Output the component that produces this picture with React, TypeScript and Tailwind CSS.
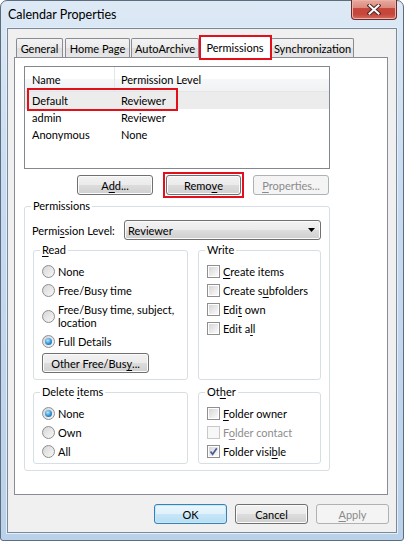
import type { ReactNode } from 'react';

// Win7 style push buttons
const btnNormal =
  'flex h-[20px] items-center justify-center rounded-[3px] border border-[#707070] bg-[linear-gradient(#f2f2f2,#ebebeb_50%,#dddddd_50%,#cfcfcf)] shadow-[inset_0_0_0_1px_#fbfbfb]';
const btnDefault =
  'flex h-[20px] items-center justify-center rounded-[3px] border border-[#3c7fb1] bg-[linear-gradient(#eaf6fd,#dff1fb_50%,#c7e7f8_50%,#b7ddf2)] shadow-[inset_0_0_0_1px_#c4e9fb]';
const btnOff =
  'flex h-[20px] items-center justify-center rounded-[3px] border border-[#adb2b5] bg-[#f4f4f4] text-[#8a8a8a]';

const tabOff =
  'flex h-[19px] items-center justify-center rounded-t-[2px] border border-b-0 border-[#898c95] bg-[linear-gradient(#f3f3f3,#ebebeb_50%,#dfdfdf_50%,#e6e6e6)] pt-[1px]';

const members = [
  { name: 'Default', level: 'Reviewer', selected: true },
  { name: 'admin', level: 'Reviewer' },
  { name: 'Anonymous', level: 'None' },
];

function U({ children }: { children: ReactNode }) {
  return <span className="underline decoration-1 underline-offset-[2px]">{children}</span>;
}

function Radio({ on }: { on?: boolean }) {
  return (
    <span className="flex h-[13px] w-[13px] shrink-0 items-center justify-center rounded-full border border-[#8e8f8f] bg-[linear-gradient(135deg,#d4d4d4,#f7f7f7)]">
      {on ? (
        <span className="h-[7px] w-[7px] rounded-full bg-[radial-gradient(circle_at_40%_35%,#bfe8fd,#2b8fd8_55%,#0f4f9e)]" />
      ) : (
        <span className="h-[9px] w-[9px] rounded-full bg-[linear-gradient(135deg,#d9d9d9,#f5f5f5)]" />
      )}
    </span>
  );
}

function Check({ on, off }: { on?: boolean; off?: boolean }) {
  return (
    <span
      className={
        off
          ? 'flex h-[13px] w-[13px] shrink-0 items-center justify-center border border-[#c9c9c9] bg-[#f7f7f7]'
          : 'flex h-[13px] w-[13px] shrink-0 items-center justify-center border border-[#8e8f8f] bg-white'
      }
    >
      {!off && (
        <span className="relative h-[9px] w-[9px] bg-[linear-gradient(135deg,#d6d6d6,#fbfbfb)]">
          {on && (
            <svg viewBox="0 0 9 9" className="absolute inset-0 h-[9px] w-[9px]">
              <path d="M1.5 4.5 L3.6 7.2 L7.8 1.2" fill="none" stroke="#4a5c98" strokeWidth="1.7" />
            </svg>
          )}
        </span>
      )}
    </span>
  );
}

function Opt({ control, children, muted }: { control: ReactNode; children: ReactNode; muted?: boolean }) {
  return (
    <div className="flex h-[19px] items-center gap-[3px]">
      {control}
      <span className={muted ? 'text-[#8d8d8d]' : ''}>{children}</span>
    </div>
  );
}

// group box; every group has 8px left padding, the legend pulls back 2px
function Group({ title, className, children }: { title: ReactNode; className: string; children: ReactNode }) {
  return (
    <fieldset className={`rounded-[3px] border border-[#d5dfe5] ${className}`}>
      <legend className="-ml-[2px] px-[2px] leading-[14px]">{title}</legend>
      {children}
    </fieldset>
  );
}

export default function App() {
  return (
    <div className="flex h-[541px] w-[404px] flex-col rounded-t-[7px] rounded-b-[3px] border border-[#5d6d80] bg-[linear-gradient(#dde9f5,#c8dbf0_35%,#bad1ea)] font-['Lato','Liberation_Sans',sans-serif] text-[11px] leading-[13px] text-black">
      {/* Title bar */}
      <div className="flex h-[27px] shrink-0 justify-between">
        <span className="self-center pl-[7px] text-[12.5px]">Calendar Properties</span>
        <div className="-mt-px mr-[6px] flex h-[20px] w-[46px] items-center justify-center rounded-b-[4px] border border-t-0 border-[#6b2c27] bg-[linear-gradient(#e9aa9f,#dc8a7e_40%,#c6463b_45%,#c6463b_75%,#d46d61)] shadow-[inset_0_0_0_1px_#eab3aa]">
          <svg viewBox="0 0 14 11" className="h-[11px] w-[14px]">
            <path d="M2.5 1.5 L11.5 9.5 M11.5 1.5 L2.5 9.5" stroke="#4a2624" strokeWidth="4" strokeLinecap="square" />
            <path d="M2.5 1.5 L11.5 9.5 M11.5 1.5 L2.5 9.5" stroke="#ffffff" strokeWidth="2" strokeLinecap="square" />
          </svg>
        </div>
      </div>

      {/* Client area */}
      <div className="mx-[6px] mb-[7px] flex-1 border border-[#7b8897] bg-[#f0f0f0] pl-[6px] pt-[7px] shadow-[0_0_0_1px_#e4eef9]">
        {/* Tabs */}
        <div className="flex h-[21px] items-end">
          <div className={`ml-[2px] w-[47px] ${tabOff}`}>General</div>
          <div className={`ml-[2px] w-[65px] ${tabOff}`}>Home Page</div>
          <div className={`ml-[1px] w-[68px] ${tabOff}`}>AutoArchive</div>
          <div className="relative z-10 -mb-px flex h-[22px] w-[72px] items-center justify-center rounded-t-[2px] border border-b-0 border-[#898c95] bg-white">
            Permissions
            <span className="absolute -top-[2px] -bottom-[2px] -left-[1px] -right-[2px] border-2 border-[#e3101c]" />
          </div>
          <div className={`w-[83px] ${tabOff}`}>Synchronization</div>
        </div>

        {/* Tab page */}
        <div className="relative h-[438px] w-[374px] border border-[#898c95] bg-white pl-[9px] pt-[8px]">
          {/* Member list */}
          <div className="h-[103px] w-[306px] border border-[#828790] bg-white">
            <div className="flex h-[25px] border-b border-[#e5e5e5] bg-[linear-gradient(#ffffff,#ffffff_50%,#f6f7f8_50%,#f1f2f4)]">
              <div className="flex w-[90px] items-center border-r border-[#e3e5e8] pl-[7px] pt-[1px]">Name</div>
              <div className="flex items-center pl-[6px] pt-[1px]">Permission Level</div>
            </div>
            {members.map((m) => (
              <div key={m.name} className={m.selected ? 'relative flex h-[17px] items-center bg-[#ececec]' : 'flex h-[17px] items-center'}>
                <div className="w-[90px] pl-[7px]">{m.name}</div>
                <div className="pl-[6px]">{m.level}</div>
                {m.selected && <span className="absolute -top-[4px] left-[2px] h-[23px] w-[151px] border-2 border-[#e3101c]" />}
              </div>
            ))}
          </div>

          {/* List buttons */}
          <div className="mt-[6px] flex w-[306px] pl-[53px]">
            <div className={`w-[76px] ${btnNormal}`}>
              A<U>d</U>d...
            </div>
            <div className="relative ml-[13px]">
              <div className={`w-[75px] ${btnNormal}`}>
                Remo<U>v</U>e
              </div>
              <span className="absolute -inset-[3px] border-2 border-[#e3101c]" />
            </div>
            <div className={`ml-[12px] w-[76px] ${btnOff}`}>
              <U>P</U>roperties...
            </div>
          </div>

          {/* Permissions group */}
          <Group title="Permissions" className="mt-[4px] w-[306px] px-[8px] pb-[6px]">
            <div className="mt-[7px] flex h-[20px] items-center">
              <span className="-ml-px w-[92px]">
                Permi<U>s</U>sion Level:
              </span>
              <div className="flex h-[20px] w-[197px] items-center justify-between rounded-[3px] border border-[#707070] bg-[linear-gradient(#f2f2f2,#ebebeb_50%,#dddddd_50%,#cfcfcf)] pl-[3px] pr-[5px] shadow-[inset_0_0_0_1px_#fbfbfb]">
                <span>Reviewer</span>
                <svg viewBox="0 0 7 4" className="h-[4px] w-[7px]">
                  <path d="M0 0 H7 L3.5 4 Z" fill="#000" />
                </svg>
              </div>
            </div>

            <div className="mt-[3px] flex gap-[10px]">
              <Group title={<><U>R</U>ead</>} className="w-[155px] pb-[6px] pl-[8px]">
                <div className="pt-[5px]">
                  <Opt control={<Radio />}>None</Opt>
                  <Opt control={<Radio />}>Free/Busy time</Opt>
                  <div className="flex h-[32px] items-center gap-[3px]">
                    <Radio />
                    <span className="leading-[13px]">
                      Free/Busy time, subject,
                      <br />
                      location
                    </span>
                  </div>
                  <Opt control={<Radio on />}>Full Details</Opt>
                  <div className={`mt-[2px] w-[107px] ${btnNormal}`}>
                    Other Free/Bus<U>y</U>...
                  </div>
                </div>
              </Group>
              <Group title="Write" className="w-[123px] pl-[8px]">
                <div className="pt-[5px]">
                  <Opt control={<Check />}>
                    <U>C</U>reate items
                  </Opt>
                  <Opt control={<Check />}>
                    Create s<U>u</U>bfolders
                  </Opt>
                  <Opt control={<Check />}>
                    Edi<U>t</U> own
                  </Opt>
                  <Opt control={<Check />}>
                    Edit a<U>l</U>l
                  </Opt>
                </div>
              </Group>
            </div>

            <div className="mt-[5px] flex gap-[10px]">
              <Group title={<>Delete <U>i</U>tems</>} className="w-[155px] pb-[2px] pl-[8px]">
                <div className="pt-[5px]">
                  <Opt control={<Radio on />}>None</Opt>
                  <Opt control={<Radio />}>Own</Opt>
                  <Opt control={<Radio />}>All</Opt>
                </div>
              </Group>
              <Group title={<>Ot<U>h</U>er</>} className="w-[123px] pb-[2px] pl-[8px]">
                <div className="pt-[5px]">
                  <Opt control={<Check />}>
                    <U>F</U>older owner
                  </Opt>
                  <Opt control={<Check off />} muted>
                    F<U>o</U>lder contact
                  </Opt>
                  <Opt control={<Check on />}>
                    Folder visi<U>b</U>le
                  </Opt>
                </div>
              </Group>
            </div>
          </Group>
        </div>

        {/* Dialog buttons */}
        <div className="mt-[9px] flex justify-end gap-[8px] pr-[7px]">
          <div className={`w-[73px] ${btnDefault}`}>OK</div>
          <div className={`w-[73px] ${btnNormal}`}>Cancel</div>
          <div className={`w-[73px] ${btnOff}`}>
            <U>A</U>pply
          </div>
        </div>
      </div>
    </div>
  );
}
